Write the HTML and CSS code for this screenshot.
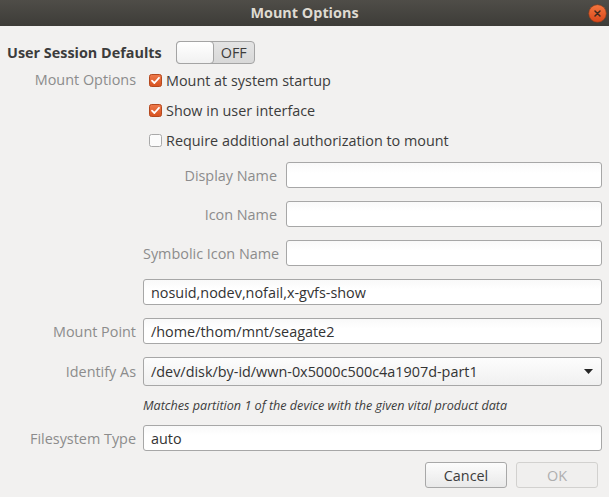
FILE: index.html
```html
<!DOCTYPE html>
<html>
<head>
<meta charset="utf-8">
<link rel="stylesheet" href="styles.css">
</head>
<body>
<div class="window">
  <div class="titlebar">
    <span class="title">Mount Options</span>
    <span class="close">
      <svg width="19" height="19" viewBox="0 0 19 19">
        <defs>
          <linearGradient id="cg" x1="0" y1="0" x2="0" y2="1">
            <stop offset="0" stop-color="#f4773f"/>
            <stop offset="1" stop-color="#d9461a"/>
          </linearGradient>
        </defs>
        <circle cx="9.5" cy="9.5" r="8.8" fill="url(#cg)" stroke="#8e3a18" stroke-width="0.6"/>
        <path d="M7 7 L12 12 M12 7 L7 12" stroke="#3d2a1f" stroke-width="1.5" stroke-linecap="round"/>
      </svg>
    </span>
  </div>
  <div class="content">
    <div class="header">
      <span class="header-label">User Session Defaults</span>
      <div class="switch">
        <div class="knob"></div>
        <span class="switch-text">OFF</span>
      </div>
    </div>
    <div class="form">
      <div class="label top">Mount Options</div>
      <div class="checks">
        <div class="check">
          <svg class="box" width="13" height="13" viewBox="0 0 13 13">
            <defs>
              <linearGradient id="og" x1="0" y1="0" x2="0" y2="1">
                <stop offset="0" stop-color="#ee7a4c"/>
                <stop offset="1" stop-color="#d8521f"/>
              </linearGradient>
            </defs>
            <rect x="0.5" y="0.5" width="12" height="12" rx="2" fill="url(#og)" stroke="#b4491f"/>
            <path d="M3 6.6 L5.4 9 L10 3.8" fill="none" stroke="#ffffff" stroke-width="1.8" stroke-linecap="round" stroke-linejoin="round"/>
          </svg>
          <span>Mount at system startup</span>
        </div>
        <div class="check">
          <svg class="box" width="13" height="13" viewBox="0 0 13 13">
            <rect x="0.5" y="0.5" width="12" height="12" rx="2" fill="url(#og)" stroke="#b4491f"/>
            <path d="M3 6.6 L5.4 9 L10 3.8" fill="none" stroke="#ffffff" stroke-width="1.8" stroke-linecap="round" stroke-linejoin="round"/>
          </svg>
          <span>Show in user interface</span>
        </div>
        <div class="check">
          <svg class="box" width="13" height="13" viewBox="0 0 13 13">
            <rect x="0.5" y="0.5" width="12" height="12" rx="2" fill="#fbfbfb" stroke="#a9a9a9"/>
          </svg>
          <span>Require additional authorization to mount</span>
        </div>
      </div>

      <div></div>
      <div class="names">
        <div class="label">Display Name</div>
        <div class="entry"></div>
        <div class="label">Icon Name</div>
        <div class="entry"></div>
        <div class="label">Symbolic Icon Name</div>
        <div class="entry"></div>
      </div>

      <div></div>
      <div class="entry">nosuid,nodev,nofail,x-gvfs-show</div>

      <div class="label">Mount Point</div>
      <div class="entry">/home/thom/mnt/seagate2</div>

      <div class="label">Identify As</div>
      <div class="entry combo">
        <span>/dev/disk/by-id/wwn-0x5000c500c4a1907d-part1</span>
        <svg width="9" height="5" viewBox="0 0 9 5"><path d="M0 0 H9 L4.5 5 Z" fill="#262626"/></svg>
      </div>

      <div></div>
      <div class="hint">Matches partition 1 of the device with the given vital product data</div>

      <div class="label">Filesystem Type</div>
      <div class="entry">auto</div>
    </div>
    <div class="buttons">
      <div class="btn">Cancel</div>
      <div class="btn disabled">OK</div>
    </div>
  </div>
</div>
</body>
</html>
```

FILE: styles.css
```css
body {
  margin: 0;
  background: #f2f1f0;
  font-family: "Open Sans", "Noto Sans", sans-serif;
  font-size: 14.4px;
  color: #3c3c3c;
}

.window {
  width: 609px;
  height: 497px;
  overflow: hidden;
}

.titlebar {
  height: 26px;
  background: linear-gradient(#4f4d48, #3d3c38);
  display: grid;
  grid-template-columns: 1fr auto 1fr;
  align-items: center;
}

.title {
  grid-column: 2;
  color: #dfdbd2;
  font-weight: bold;
  font-size: 14.4px;
  line-height: 26px;
}

.close {
  grid-column: 3;
  justify-self: end;
  margin-right: 2px;
  display: flex;
}

.content {
  padding: 15px 7px 0;
}

.header {
  display: flex;
  align-items: center;
  gap: 14px;
  height: 23px;
}

.header-label {
  font-weight: bold;
}

.switch {
  width: 79px;
  height: 23px;
  box-sizing: border-box;
  border: 1px solid #a4a4a4;
  border-radius: 4px;
  background: linear-gradient(#e4e4e4, #d8d8d8);
  display: flex;
}

.knob {
  width: 38px;
  height: 23px;
  box-sizing: border-box;
  margin: -1px 0 -1px -1px;
  border: 1px solid #a4a4a4;
  border-radius: 4px;
  background: linear-gradient(#ffffff, #f1f1f1);
}

.switch-text {
  flex: 1;
  display: flex;
  align-items: center;
  justify-content: center;
  color: #3c3c3c;
}

.form {
  display: grid;
  grid-template-columns: 129px 1fr;
  column-gap: 7px;
  row-gap: 13px;
  align-items: center;
  margin-top: 1px;
}

.label {
  color: #8c8c8c;
  text-align: right;
  white-space: nowrap;
}

.label.top {
  align-self: start;
  line-height: 30px;
}

.checks {
  display: flex;
  flex-direction: column;
  margin-bottom: -6px;
}

.check {
  display: flex;
  align-items: center;
  height: 30px;
  padding-left: 6px;
  gap: 4px;
}

.box {
  flex: none;
}

.names {
  display: grid;
  grid-template-columns: 134px 1fr;
  column-gap: 9px;
  row-gap: 13px;
  align-items: center;
}

.entry {
  height: 26px;
  box-sizing: border-box;
  border: 1px solid #a7a7a7;
  border-radius: 3px;
  background: linear-gradient(#f9f9f9, #ffffff 40%);
  display: flex;
  align-items: center;
  padding: 0 7px;
  color: #333333;
  white-space: nowrap;
}

.combo {
  height: 29px;
  justify-content: space-between;
  padding: 0 8px 0 7px;
  background: linear-gradient(#fdfdfd, #f0f0f0);
}

.hint {
  font-style: italic;
  font-size: 12.6px;
  line-height: 13px;
  color: #3c3c3c;
  white-space: nowrap;
}

.buttons {
  display: flex;
  justify-content: flex-end;
  gap: 9px;
  margin-top: 11px;
  margin-right: 4px;
}

.btn {
  width: 82px;
  height: 26px;
  box-sizing: border-box;
  border: 1px solid #a8a8a8;
  border-radius: 3px;
  background: linear-gradient(#fcfcfc, #e9e9e9);
  display: flex;
  align-items: center;
  justify-content: center;
  color: #3c3c3c;
}

.btn.disabled {
  color: #aeaeae;
  border-color: #d2d1cf;
  background: #f0efee;
}
```
